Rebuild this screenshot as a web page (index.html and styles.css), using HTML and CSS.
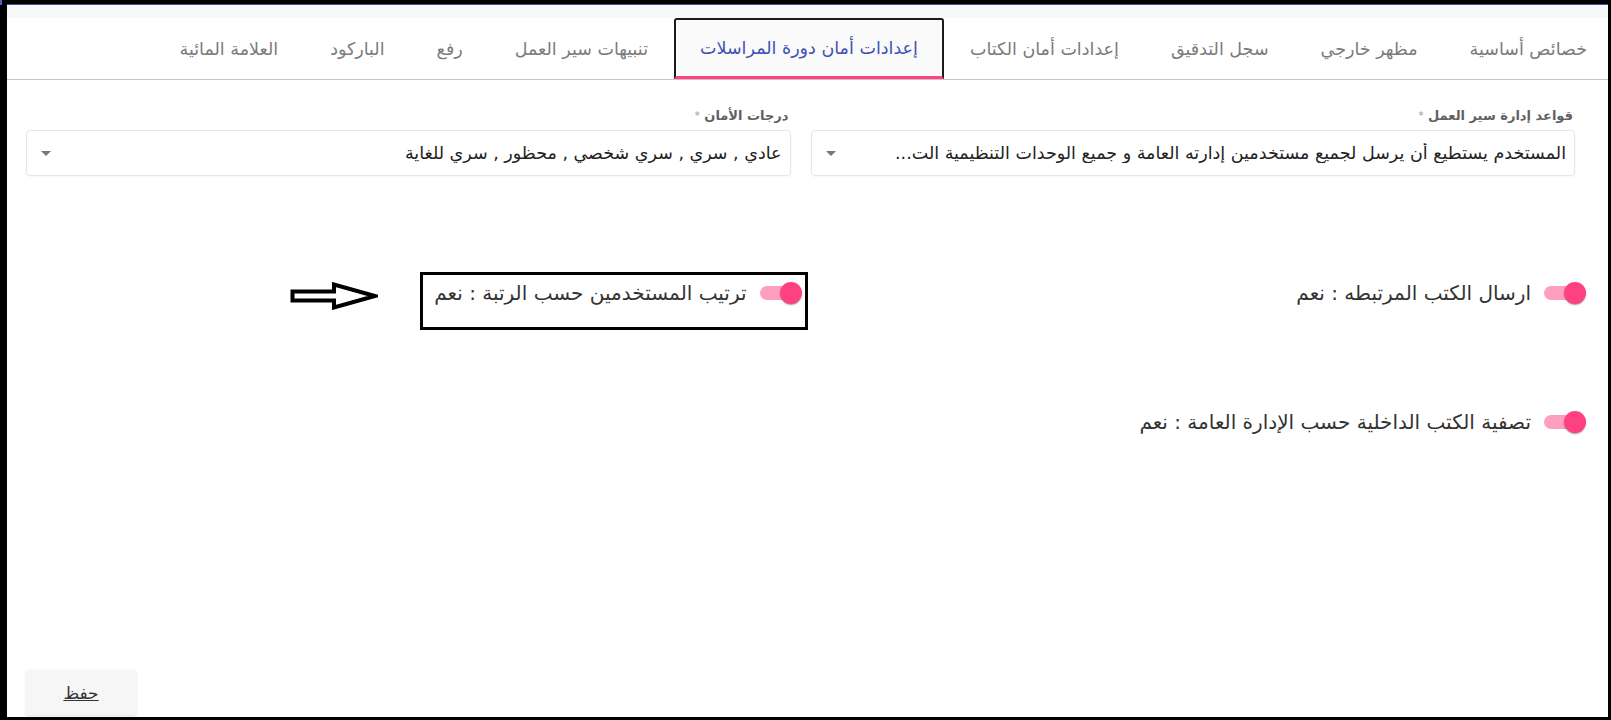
FILE: index.html
```html
<!DOCTYPE html>
<html lang="ar" dir="rtl">
<head>
<meta charset="utf-8">
<title>إعدادات</title>
<link rel="stylesheet" href="styles.css">
</head>
<body>
<div class="corner"></div>
<div class="app">
  <div class="strip"></div>
  <nav class="tabs">
    <div class="tab">خصائص أساسية</div>
    <div class="tab">مظهر خارجي</div>
    <div class="tab">سجل التدقيق</div>
    <div class="tab">إعدادات أمان الكتاب</div>
    <div class="tab active">إعدادات أمان دورة المراسلات</div>
    <div class="tab">تنبيهات سير العمل</div>
    <div class="tab">رفع</div>
    <div class="tab">الباركود</div>
    <div class="tab">العلامة المائية</div>
  </nav>
  <main class="content">
    <div class="fields">
      <div class="field">
        <div class="label">قواعد إدارة سير العمل <span class="req">*</span></div>
        <div class="select">
          <span class="value">المستخدم يستطيع أن يرسل لجميع مستخدمين إدارته العامة و جميع الوحدات التنظيمية الت...</span>
          <span class="caret"></span>
        </div>
      </div>
      <div class="field">
        <div class="label">درجات الأمان <span class="req">*</span></div>
        <div class="select">
          <span class="value">عادي , سري , سري شخصي , محظور , سري للغاية</span>
          <span class="caret"></span>
        </div>
      </div>
    </div>
    <div class="toggles">
      <div class="cell">
        <div class="toggle-item">
          <span class="toggle"><span class="track"></span><span class="knob"></span></span>
          <span class="toggle-label">ارسال الكتب المرتبطه : نعم</span>
        </div>
      </div>
      <div class="cell">
        <div class="toggle-item boxed">
          <span class="toggle"><span class="track"></span><span class="knob"></span></span>
          <span class="toggle-label">ترتيب المستخدمين حسب الرتبة : نعم</span>
        </div>
        <svg class="arrow" width="88" height="28" viewBox="0 0 88 28">
          <polygon points="2.5,9.5 44,9.5 44,2.5 85,14 44,25.5 44,18.5 2.5,18.5" fill="#fff" stroke="#000" stroke-width="4" stroke-linejoin="miter"/>
        </svg>
      </div>
      <div class="cell">
        <div class="toggle-item">
          <span class="toggle"><span class="track"></span><span class="knob"></span></span>
          <span class="toggle-label">تصفية الكتب الداخلية حسب الإدارة العامة : نعم</span>
        </div>
      </div>
      <div class="cell"></div>
    </div>
    <div class="actions">
      <button class="save">حفظ</button>
    </div>
  </main>
</div>
</body>
</html>
```
FILE: styles.css
```css
html, body {
  margin: 0;
  padding: 0;
  background: #000;
  height: 720px;
  overflow: hidden;
}

body {
  position: relative;
}

.corner {
  position: absolute;
  left: 0;
  top: 0;
  width: 2px;
  height: 5px;
  background: #5060b8;
}

.app {
  box-sizing: border-box;
  margin: 4px 3px 0 7px;
  height: 713px;
  border-top: 1px solid #3f51b5;
  background: #fff;
  display: flex;
  flex-direction: column;
  direction: rtl;
  font-family: "DejaVu Sans", sans-serif;
  overflow: hidden;
}

.strip {
  height: 13px;
  background: #f8f8f8;
  flex-shrink: 0;
}

.tabs {
  display: flex;
  box-sizing: border-box;
  height: 62px;
  border-bottom: 1px solid #c6c6c6;
  margin-right: -5px;
  flex-shrink: 0;
}

.tab {
  display: flex;
  align-items: center;
  padding: 0 26px;
  font-size: 17.5px;
  color: #7b7b7b;
  white-space: nowrap;
}

.tab.active {
  padding: 0 24px;
  border: 2px solid #1b1b1b;
  border-bottom: 3px solid #ff4081;
  border-radius: 3px 3px 0 0;
  background: #fafafa;
  color: #3f51b5;
}

.content {
  flex: 1;
  display: flex;
  flex-direction: column;
  padding: 27px 33px 2px 19px;
}

.fields {
  display: grid;
  grid-template-columns: 1fr 1fr;
  column-gap: 20px;
}

.field {
  display: flex;
  flex-direction: column;
  min-width: 0;
}

.label {
  font-size: 13px;
  line-height: 18px;
  color: #616161;
  padding-right: 2px;
  margin-bottom: 5px;
  font-weight: bold;
}

.req {
  font-size: 10px;
  color: #999;
  vertical-align: top;
  font-weight: normal;
}

.select {
  box-sizing: border-box;
  height: 46px;
  border: 1px solid #e6e6e6;
  border-radius: 4px;
  box-shadow: 0 1px 2px rgba(0, 0, 0, 0.04);
  padding: 0 8px 0 14px;
  display: flex;
  align-items: center;
  justify-content: space-between;
  gap: 20px;
}

.value {
  font-size: 17.5px;
  color: #222;
  white-space: nowrap;
  overflow: hidden;
  min-width: 0;
}

.caret {
  width: 0;
  height: 0;
  border-left: 5px solid transparent;
  border-right: 5px solid transparent;
  border-top: 5px solid #777;
  flex-shrink: 0;
}

.toggles {
  display: grid;
  grid-template-columns: 1fr 1fr;
  column-gap: 20px;
  row-gap: 71px;
  margin-top: 96px;
  margin-right: -17px;
  margin-left: 17px;
}

.cell {
  display: flex;
  align-items: flex-start;
}

.toggle-item {
  display: flex;
  align-items: center;
  height: 36px;
  border: 3px solid transparent;
  padding: 0 3px 16px 11px;
  gap: 13px;
}

.toggle-item.boxed {
  border-color: #000;
}

.toggle {
  position: relative;
  width: 42px;
  height: 22px;
  flex-shrink: 0;
}

.track {
  position: absolute;
  left: 0;
  top: 4px;
  width: 36px;
  height: 14px;
  border-radius: 7px;
  background: #ff9fc0;
}

.knob {
  position: absolute;
  right: 0;
  top: 0;
  width: 22px;
  height: 22px;
  border-radius: 50%;
  background: #ff4081;
  box-shadow: 0 2px 1px -1px rgba(0, 0, 0, 0.2), 0 1px 1px 0 rgba(0, 0, 0, 0.14), 0 1px 3px 0 rgba(0, 0, 0, 0.12);
}

.toggle-label {
  font-size: 20px;
  color: #333;
  white-space: nowrap;
}

.arrow {
  margin-right: 42px;
  margin-top: 10px;
  flex-shrink: 0;
}

.actions {
  margin-top: auto;
  display: flex;
  justify-content: flex-end;
}

.save {
  width: 110px;
  height: 45px;
  background: #f6f6f6;
  border: none;
  border-radius: 3px;
  box-shadow: 0 1px 3px rgba(0, 0, 0, 0.12);
  font-family: "DejaVu Sans", sans-serif;
  font-size: 17px;
  color: #333;
  text-decoration: underline;
  cursor: pointer;
}
```
